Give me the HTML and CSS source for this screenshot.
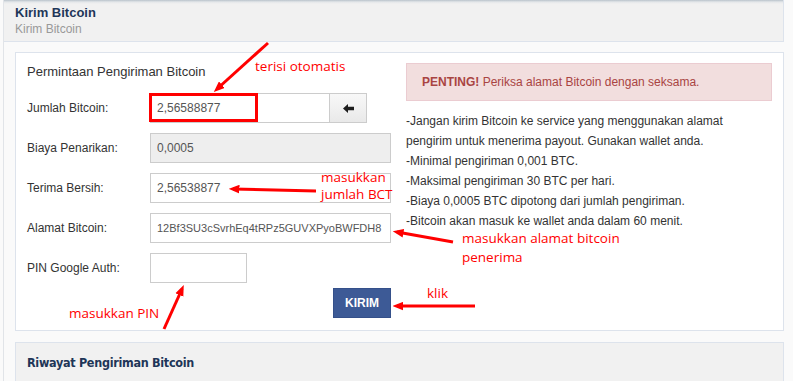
FILE: index.html
```html
<!DOCTYPE html>
<html lang="id">
<head>
    <meta charset="UTF-8">
    <meta name="viewport" content="width=device-width, initial-scale=1.0">
    <title>Kirim Bitcoin</title>
    <link rel="stylesheet" href="styles.css">
</head>
<body>
    <div class="page">
        <div class="page-header">
            <h1>Kirim Bitcoin</h1>
            <div class="subtitle">Kirim Bitcoin</div>
        </div>

        <div class="content">
            <div class="panel send-panel">
                <div class="form-col">
                    <h3 class="form-title">Permintaan Pengiriman Bitcoin</h3>

                    <div class="form-row">
                        <label for="amount">Jumlah Bitcoin:</label>
                        <div class="input-group">
                            <input type="text" id="amount" value="2,56588877">
                            <button type="button" class="addon-btn">
                                <svg width="11" height="9" viewBox="0 0 11 9"><path d="M0 4.5 L5 0 L5 2.8 L11 2.8 L11 6.2 L5 6.2 L5 9 Z" fill="#1d1d1d"/></svg>
                            </button>
                        </div>
                    </div>
                    <div class="form-row">
                        <label for="fee">Biaya Penarikan:</label>
                        <input type="text" id="fee" value="0,0005" disabled>
                    </div>
                    <div class="form-row">
                        <label for="net">Terima Bersih:</label>
                        <input type="text" id="net" value="2,56538877">
                    </div>
                    <div class="form-row">
                        <label for="address">Alamat Bitcoin:</label>
                        <input type="text" id="address" class="address-input" value="12Bf3SU3cSvrhEq4tRPz5GUVXPyoBWFDH8">
                    </div>
                    <div class="form-row">
                        <label for="pin">PIN Google Auth:</label>
                        <input type="text" id="pin" class="pin-input">
                    </div>
                    <div class="form-actions">
                        <button type="submit" class="send-btn">KIRIM</button>
                    </div>
                </div>

                <div class="info-col">
                    <div class="alert"><b>PENTING!</b> Periksa alamat Bitcoin dengan seksama.</div>
                    <p class="info">
                        -Jangan kirim Bitcoin ke service yang menggunakan alamat<br>
                        pengirim untuk menerima payout. Gunakan wallet anda.<br>
                        -Minimal pengiriman 0,001 BTC.<br>
                        -Maksimal pengiriman 30 BTC per hari.<br>
                        -Biaya 0,0005 BTC dipotong dari jumlah pengiriman.<br>
                        -Bitcoin akan masuk ke wallet anda dalam 60 menit.
                    </p>
                </div>
            </div>

            <div class="panel history-panel">
                <h3>Riwayat Pengiriman Bitcoin</h3>
            </div>
        </div>
    </div>

    <!-- coretan penjelasan di atas screenshot -->
    <div class="mark-box"></div>
    <svg class="notes" width="793" height="381" viewBox="0 0 793 381">
        <defs>
            <marker id="head" viewBox="0 0 10 8" markerWidth="3.6" markerHeight="3" refX="6" refY="4" orient="auto">
                <path d="M0 0 L10 4 L0 8 Z" fill="#f00"/>
            </marker>
        </defs>
        <g stroke="#f00" stroke-width="3" fill="none" marker-end="url(#head)">
            <line x1="268" y1="43" x2="217" y2="89"/>
            <line x1="316" y1="191" x2="233" y2="189"/>
            <line x1="453" y1="242" x2="397" y2="232"/>
            <line x1="475" y1="306" x2="397" y2="306"/>
            <line x1="164" y1="329" x2="182" y2="289"/>
        </g>
    </svg>
    <span class="note note-auto">terisi otomatis</span>
    <span class="note note-net">masukkan<br>jumlah BCT</span>
    <span class="note note-addr">masukkan alamat bitcoin<br>penerima</span>
    <span class="note note-click">klik</span>
    <span class="note note-pin">masukkan PIN</span>
</body>
</html>
```

FILE: styles.css
```css
:root {
    --navy: #1e3658;
    --line: #dde3ec;
    --text: #333;
    --input-border: #ccc;
    --btn-blue: #3d5a96;
}
* { box-sizing: border-box; }
body {
    margin: 0;
    background: #fafafa;
    font-family: 'Liberation Sans', Arial, sans-serif;
    font-size: 12px;
    color: var(--text);
    overflow: hidden;
}
.page {
    margin-left: 3px;
    width: 781px;
    min-height: 381px;
    border-left: 1px solid #e1e4e8;
}
.page-header {
    height: 42px;
    padding: 4px 11px 0 11px;
    background: linear-gradient(#b9c2cb 0, #e4e7ea 2px, #f1f1f1 4px);
    border-right: 1px solid var(--line);
    border-bottom: 1px solid var(--line);
}
.page-header h1 {
    margin: 0;
    font-size: 13px;
    line-height: 17px;
    font-weight: 700;
    color: var(--navy);
}
.page-header .subtitle {
    font-size: 12px;
    line-height: 17px;
    color: #999;
}
.content {
    padding: 10px 0 0 11px;
}
.panel {
    border: 1px solid var(--line);
}
.send-panel {
    background: #fff;
    display: grid;
    grid-template-columns: 364px 366px;
    column-gap: 15px;
    padding: 9px 11px 12px 11px;
}
.form-title {
    margin: 0 0 11px 0;
    font-size: 13px;
    line-height: 20px;
    font-weight: 400;
}
.form-row {
    display: flex;
    height: 30px;
    margin-bottom: 10px;
}
.form-row label {
    width: 123px;
    flex-shrink: 0;
    line-height: 30px;
}
input[type="text"] {
    flex: 1;
    min-width: 0;
    height: 30px;
    padding: 0 6px;
    border: 1px solid var(--input-border);
    border-radius: 0;
    background: #fff;
    font-family: inherit;
    font-size: 12px;
    color: #555;
    outline: none;
}
input[disabled] {
    background: #eee;
}
.address-input {
    font-size: 11px !important;
}
.pin-input {
    flex: 0 0 97px !important;
}
.input-group {
    display: flex;
    width: 217px;
}
.addon-btn {
    width: 38px;
    height: 30px;
    margin-left: -1px;
    padding: 0;
    border: 1px solid var(--input-border);
    background: linear-gradient(#f8f8f8, #e9e9e9);
    display: flex;
    align-items: center;
    justify-content: center;
    cursor: pointer;
}
.form-actions {
    display: flex;
    justify-content: flex-end;
    margin-top: -5px;
}
.send-btn {
    width: 58px;
    height: 30px;
    border: 1px solid #35508a;
    background: var(--btn-blue);
    color: #fff;
    font-family: inherit;
    font-size: 12px;
    font-weight: 700;
    cursor: pointer;
}
.info-col {
    padding-top: 1px;
}
.alert {
    padding: 10px 15px;
    line-height: 16px;
    background: #f2dede;
    border: 1px solid #ebccd1;
    color: #a94442;
}
.info {
    margin: 10px 0 0 0;
    line-height: 20px;
}
.history-panel {
    margin-top: 11px;
    height: 60px;
    padding: 10px 11px;
    background: #f1f1f1;
}
.history-panel h3 {
    margin: 0;
    font-family: 'DejaVu Sans Condensed', 'Liberation Sans Narrow', 'Liberation Sans', sans-serif;
    font-size: 12.5px;
    line-height: 20px;
    font-weight: 700;
    letter-spacing: -0.3px;
    color: var(--navy);
}

/* anotasi merah */
.mark-box {
    position: absolute;
    left: 149px;
    top: 93px;
    width: 109px;
    height: 29px;
    border: 3px solid #f00;
}
.notes {
    position: absolute;
    left: 0;
    top: 0;
    pointer-events: none;
}
.note {
    position: absolute;
    font-family: 'Open Sans', sans-serif;
    font-size: 13.5px;
    line-height: 18px;
    color: #f00;
    white-space: nowrap;
}
.note-auto { left: 255px; top: 57px; }
.note-net { left: 321px; top: 169px; line-height: 17px; }
.note-addr { left: 462px; top: 229px; line-height: 19px; }
.note-click { left: 427px; top: 284px; }
.note-pin { left: 69px; top: 304px; }
```
